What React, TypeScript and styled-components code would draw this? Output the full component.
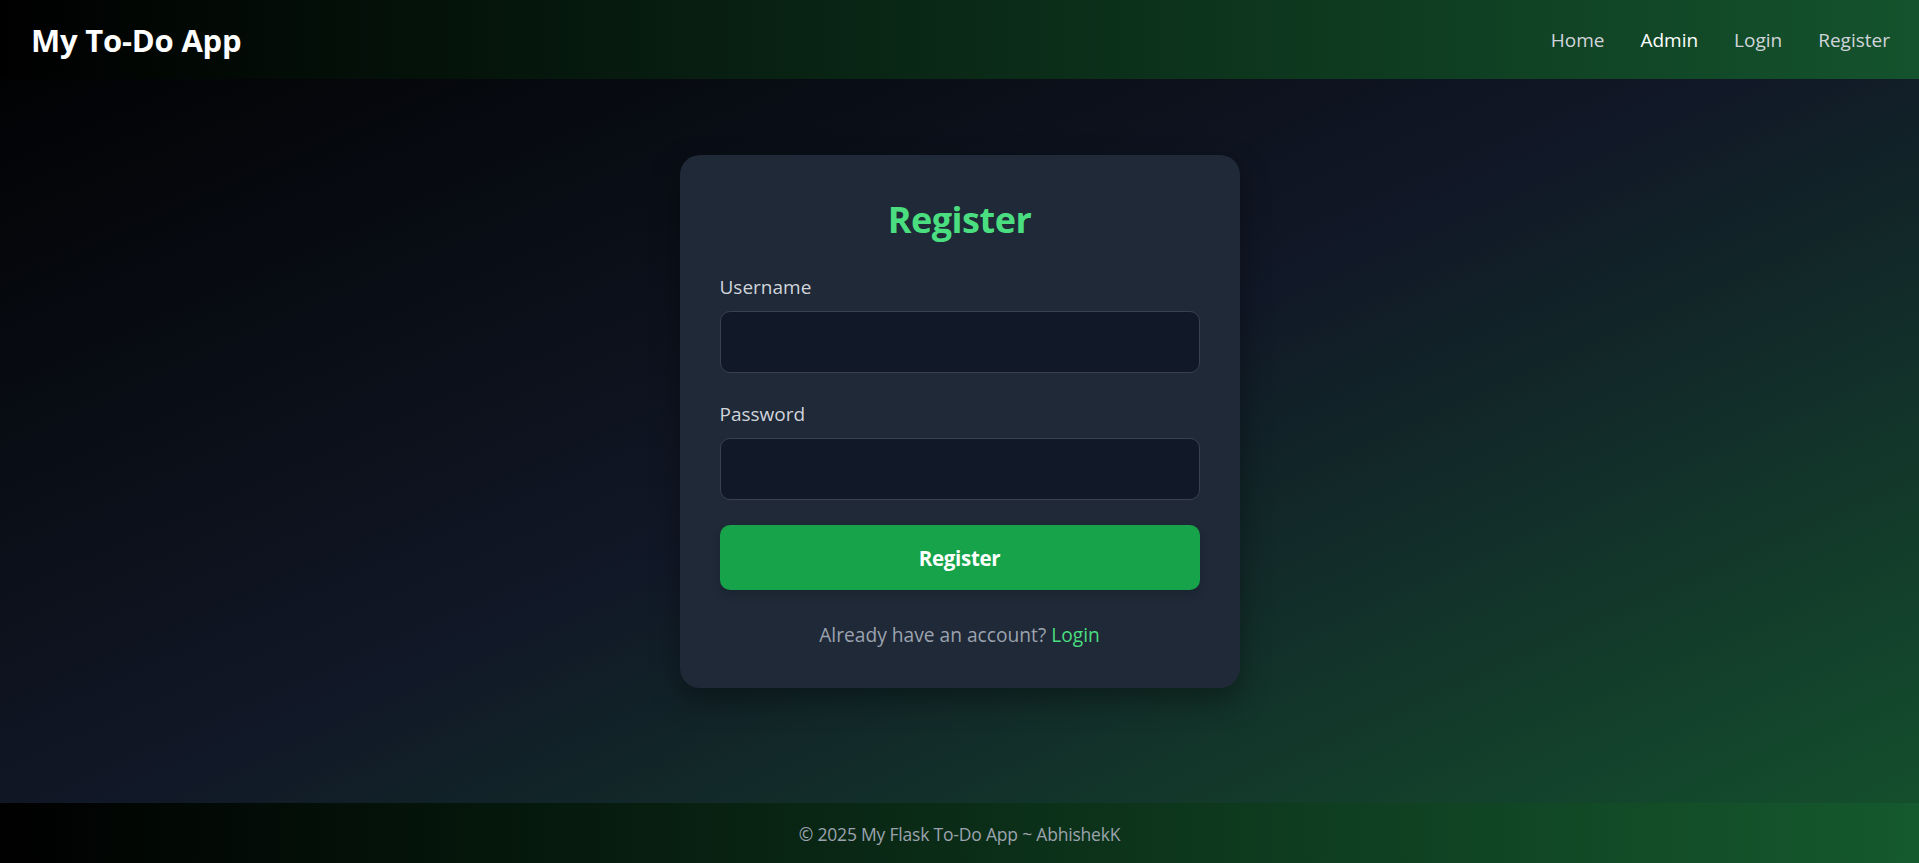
import React from "react";
import styled, { createGlobalStyle } from "styled-components";

const GlobalStyle = createGlobalStyle`
  * { box-sizing: border-box; }
  html, body { margin: 0; padding: 0; }
  body {
    font-family: "Segoe UI", "Open Sans", "Noto Sans", sans-serif;
    background: #000;
  }
`;

const Page = styled.div`
  height: 100vh;
  display: flex;
  flex-direction: column;
  overflow: hidden;
  background: linear-gradient(to bottom right, #000000, #111827, #14532d);
`;

const Header = styled.header`
  height: 79px;
  flex-shrink: 0;
  display: flex;
  align-items: center;
  justify-content: space-between;
  padding: 0 29px 0 31px;
  background: linear-gradient(to right, #000000, #14532d);
`;

const Brand = styled.div`
  color: #ffffff;
  font-size: 31px;
  font-weight: 700;
  letter-spacing: -0.2px;
`;

const Nav = styled.nav`
  display: flex;
  align-items: center;
  gap: 36px;
`;

const NavLink = styled.a<{ $active?: boolean }>`
  color: ${(p) => (p.$active ? "#ffffff" : "#d1d5db")};
  font-size: 19px;
  text-decoration: none;
`;

const Main = styled.main`
  flex: 1;
  display: flex;
  justify-content: center;
  align-items: flex-start;
  padding-top: 76px;
`;

const Card = styled.div`
  width: 560px;
  padding: 40px 40px 38px;
  border-radius: 20px;
  background: #1f2937;
  box-shadow: 0 12px 30px rgba(0, 0, 0, 0.35);
  display: flex;
  flex-direction: column;
`;

const Title = styled.h2`
  margin: 0 0 27px;
  text-align: center;
  color: #4ade80;
  font-size: 36px;
  line-height: 50px;
  font-weight: 700;
  letter-spacing: -0.5px;
`;

const Field = styled.div`
  display: flex;
  flex-direction: column;
  margin-bottom: 26px;

  & + & {
    margin-bottom: 25px;
  }
`;

const Label = styled.label`
  color: #d1d5db;
  font-size: 19px;
  line-height: 30px;
  margin-bottom: 9px;
`;

const Input = styled.input`
  height: 62px;
  width: 100%;
  border-radius: 10px;
  border: 1px solid #374151;
  background: #111827;
  color: #f3f4f6;
  font-size: 18px;
  padding: 0 16px;
  outline: none;
  font-family: inherit;
`;

const Button = styled.button`
  height: 65px;
  width: 100%;
  border: none;
  border-radius: 10px;
  background: #16a34a;
  color: #ffffff;
  font-family: inherit;
  font-size: 20.5px;
  font-weight: 700;
  letter-spacing: -0.3px;
  cursor: pointer;
  box-shadow: 0 4px 10px rgba(0, 0, 0, 0.15);
`;

const Switch = styled.p`
  margin: 30px 0 0;
  text-align: center;
  color: #9ca3af;
  font-size: 19.2px;
  line-height: 30px;
`;

const GreenLink = styled.a`
  color: #4ade80;
  text-decoration: none;
`;

const Footer = styled.footer`
  height: 60px;
  flex-shrink: 0;
  display: flex;
  align-items: center;
  justify-content: center;
  padding-top: 2px;
  background: linear-gradient(to right, #000000, #15592e);
  color: #9ca3af;
  font-size: 17.5px;
  letter-spacing: -0.2px;
`;

export default function App() {
  return (
    <>
      <GlobalStyle />
      <Page>
        <Header>
          <Brand>My To-Do App</Brand>
          <Nav>
            <NavLink href="#">Home</NavLink>
            <NavLink href="#" $active>Admin</NavLink>
            <NavLink href="#">Login</NavLink>
            <NavLink href="#">Register</NavLink>
          </Nav>
        </Header>
        <Main>
          <Card>
            <Title>Register</Title>
            <Field>
              <Label htmlFor="username">Username</Label>
              <Input id="username" type="text" />
            </Field>
            <Field>
              <Label htmlFor="password">Password</Label>
              <Input id="password" type="password" />
            </Field>
            <Button type="button">Register</Button>
            <Switch>
              Already have an account? <GreenLink href="#">Login</GreenLink>
            </Switch>
          </Card>
        </Main>
        <Footer>© 2025 My Flask To-Do App ~ AbhishekK</Footer>
      </Page>
    </>
  );
}
